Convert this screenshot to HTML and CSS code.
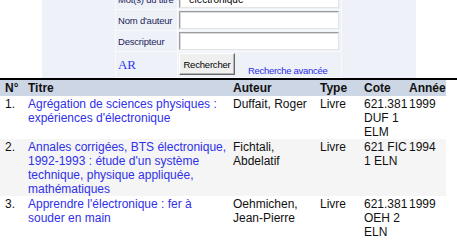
FILE: index.html
```html
<!DOCTYPE html>
<html lang="fr">
<head>
<meta charset="utf-8">
<title>Recherche</title>
<link rel="stylesheet" href="styles.css">
</head>
<body>
<div class="search">
  <div class="panel">
    <table class="form">
      <tr>
        <td class="lbl">Mot(s) du titre</td>
        <td class="fld"><input class="txt" type="text" value="électronique"></td>
      </tr>
      <tr>
        <td class="lbl">Nom d'auteur</td>
        <td class="fld"><input class="txt" type="text"></td>
      </tr>
      <tr>
        <td class="lbl">Descripteur</td>
        <td class="fld"><input class="txt" type="text"></td>
      </tr>
      <tr>
        <td class="lbl"><a class="ar" href="#">AR</a></td>
        <td class="fld">
          <div class="actions">
            <button class="btn" type="button">Rechercher</button>
            <a class="adv" href="#">Recherche avancée</a>
          </div>
        </td>
      </tr>
    </table>
  </div>
</div>
<table class="results">
  <colgroup>
    <col class="c-no"><col class="c-title"><col class="c-author"><col class="c-type"><col class="c-cote"><col class="c-year">
  </colgroup>
  <thead>
    <tr>
      <th class="no">N°</th><th>Titre</th><th>Auteur</th><th>Type</th><th>Cote</th><th class="year">Année</th>
    </tr>
  </thead>
  <tbody>
    <tr>
      <td class="no">1.</td>
      <td><a class="title" href="#">Agrégation de sciences physiques : expériences d'électronique</a></td>
      <td>Duffait, Roger</td>
      <td>Livre</td>
      <td>621.381 DUF 1 ELM</td>
      <td class="year">1999</td>
    </tr>
    <tr class="alt">
      <td class="no">2.</td>
      <td><a class="title" href="#">Annales corrigées, BTS électronique, 1992-1993 : étude d'un système technique, physique appliquée, mathématiques</a></td>
      <td>Fichtali, Abdelatif</td>
      <td>Livre</td>
      <td>621 FIC 1 ELN</td>
      <td class="year">1994</td>
    </tr>
    <tr>
      <td class="no">3.</td>
      <td><a class="title" href="#">Apprendre l'électronique : fer à souder en main</a></td>
      <td>Oehmichen, Jean-Pierre</td>
      <td>Livre</td>
      <td>621.381 OEH 2 ELN</td>
      <td class="year">1999</td>
    </tr>
  </tbody>
</table>
</body>
</html>
```

FILE: styles.css
```css
html, body {
  margin: 0;
  padding: 0;
  background: #ffffff;
  font-family: "Liberation Sans", Arial, sans-serif;
}

.search {
  border-bottom: 2px solid #000000;
}

.panel {
  width: 374px;
  margin: -12px auto 0;
  background: #eef2f8;
}

.form {
  margin: 0 auto;
  border-collapse: separate;
  border-spacing: 1px;
  background: #f8fafd;
}

.form td {
  background: #eef2f8;
  padding: 1px;
  vertical-align: middle;
}

.form .lbl {
  width: 58px;
  padding-left: 2px;
  font-size: 9.5px;
  letter-spacing: -0.2px;
  color: #1e1e5a;
  white-space: nowrap;
}

.form .fld {
  width: 161px;
}

.txt {
  display: block;
  box-sizing: border-box;
  width: 160px;
  height: 18px;
  margin: 0;
  padding: 0 0 0 9px;
  border: 1px solid;
  border-color: #9c9c9c #e4e4e4 #e4e4e4 #9c9c9c;
  box-shadow: inset 1px 1px 0 #dcdcdc;
  background: #ffffff;
  font-family: "Liberation Sans", Arial, sans-serif;
  font-size: 10px;
  color: #000000;
}

.ar {
  font-family: "Liberation Serif", "Times New Roman", serif;
  font-size: 13px;
  color: #3434f4;
  text-decoration: none;
}

.actions {
  display: flex;
  align-items: flex-end;
  height: 23px;
}

.btn {
  align-self: flex-start;
  box-sizing: border-box;
  width: 56px;
  height: 22px;
  margin: 0;
  padding: 0;
  background: #efefef;
  border: 1px solid;
  border-color: #ffffff #6a6a6a #6a6a6a #ffffff;
  box-shadow: inset -1px -1px 0 #b4b4b4;
  font-family: "Liberation Sans", Arial, sans-serif;
  font-size: 9.5px;
  letter-spacing: -0.2px;
  color: #000000;
}

.adv {
  margin-left: 13px;
  font-size: 9.5px;
  letter-spacing: -0.3px;
  color: #2b2be8;
  text-decoration: none;
  line-height: 11px;
}

.results {
  width: 446px;
  table-layout: fixed;
  border-collapse: collapse;
  font-size: 12px;
  line-height: normal;
  color: #111111;
}

.c-no { width: 25px; }
.c-title { width: 205px; }
.c-author { width: 87px; }
.c-type { width: 44px; }
.c-cote { width: 46px; }
.c-year { width: 39px; }

.results th {
  background: #cdd6e4;
  text-align: left;
  font-weight: bold;
  padding: 1px 0 1px 3px;
}

.results td {
  vertical-align: top;
  padding: 1px 0 0 3px;
}

.results .no {
  padding-left: 5px;
}

.results .year {
  padding-left: 2px;
}

.results .alt td {
  background: #f5f5f5;
}

.title {
  color: #3030e8;
  text-decoration: none;
}
```
